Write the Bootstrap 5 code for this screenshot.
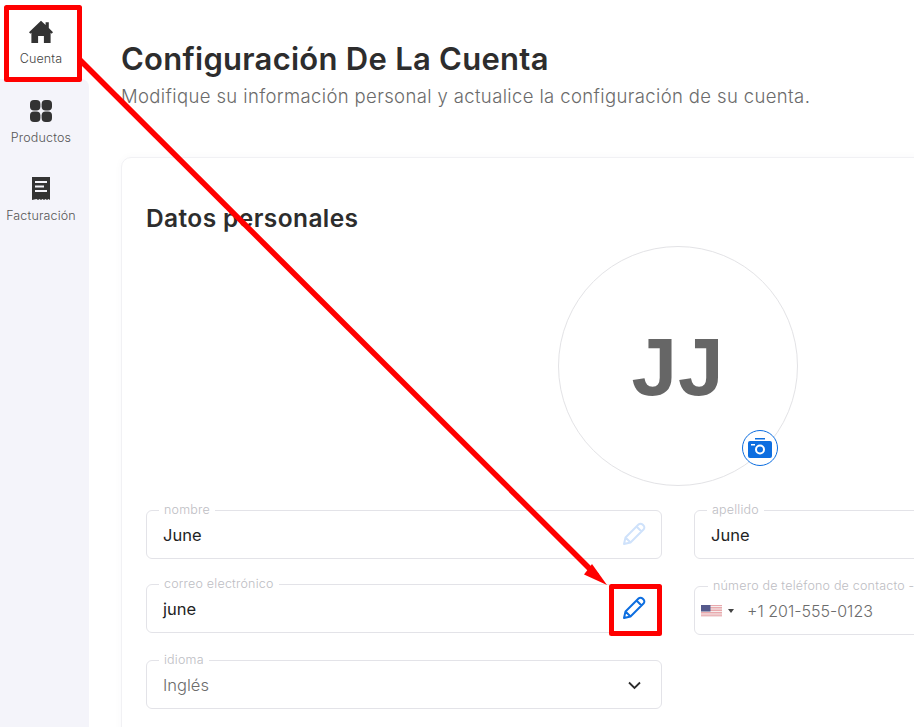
<!doctype html>
<html lang="es">
<head>
<meta charset="utf-8">
<title>Configuración de la cuenta</title>
<link href="https://cdn.jsdelivr.net/npm/bootstrap@5.3.0/dist/css/bootstrap.min.css" rel="stylesheet">
<style>
html,body{height:727px;overflow:hidden;background:#fff}
body{font-family:Inter,"Noto Sans",sans-serif;color:#2b2b2b;position:relative}
.shell{width:1235px;height:727px}
.side-rail{width:89px;flex:none;background:#fff}
.rail-item{height:78.5px;background:#f4f4fa;color:#555;font-size:12.5px;font-weight:300;padding:20px 7px 0 0;gap:8px;text-decoration:none;line-height:14px;letter-spacing:.15px;white-space:nowrap}
.rail-item.is-on{background:#fff;color:#444}
.rail-item.after-on{border-top-right-radius:8px}
.rail-fill{background:#f4f4fa}
.rail-item svg{display:block;height:24px;width:24px;fill:#333;flex:none}
.main-pane{padding:40px 0 0 32px}
.page-title{font-size:31px;font-weight:600;line-height:38px;margin:0;color:#2d2d2d;letter-spacing:.27px}
.page-sub{font-size:18.5px;font-weight:300;line-height:24px;margin:6px 0 0;color:#6b6b6b;letter-spacing:.37px}
.panel{margin-top:49px;border:1px solid #f1f1f4;border-radius:10px;padding:42px 24px 0;box-shadow:0 0 8px rgba(40,40,80,.03);height:640px}
.panel-head{font-size:24.500px;font-weight:600;line-height:36px;margin:0;color:#2d2d2d;letter-spacing:.4px}
.avatar-wrap{width:240px;height:240px;margin:10px auto 18px;position:relative}
.avatar-disc{width:240px;height:240px;border:1px solid #e3e3e6;border-radius:50%;font-family:"Liberation Sans",sans-serif;font-weight:700;font-size:82px;color:#666;letter-spacing:1px}
.cam-btn{position:absolute;left:184px;top:184px;width:36px;height:36px;border:1.5px solid #0d6ee0;border-radius:50%;background:#fff}
.cam-btn svg{width:24px;height:20px;fill:#0d6ee0}
.form-cols{gap:32px}
.form-col{width:516px;flex:none}
.fld{border:1px solid #e3e3e8;border-radius:6px;padding:0 16px;height:55px;min-width:0;margin:0;position:relative}
.fld legend{float:none;width:auto;font-size:12.5px;font-weight:300;line-height:12px;color:#bdbdc3;padding:0 5px;margin:0 0 0 -4px;letter-spacing:.2px}
.fld-val{font-size:16.5px;line-height:24px;color:#232323;padding-top:7px;font-weight:400}
.fld-val.is-muted{color:#6c6c6c;font-weight:300}
.gap-a{margin-top:19px}.gap-b{margin-top:21px}.gap-c{margin-top:21px}
.edit-ico{position:absolute;right:15px;top:6px;width:24px;height:24px;fill:none;stroke:#0d6ee0;stroke-width:2;stroke-linejoin:round}
.edit-ico.is-off{stroke:#cfe2fb}
.chev{position:absolute;right:20px;top:15px;width:13px;height:9px;fill:none;stroke:#2b2b2b;stroke-width:1.8}
.flag-ico{width:21px;height:12px;flex:none}
.flag-caret{width:0;height:0;border:3.5px solid transparent;border-top:4.5px solid #444;border-bottom:0;margin:0 13px 0 6px}
.phone-row{padding-top:7px}
.fld-phone{padding-left:6px}
.fld-phone .fld-val{font-size:16px}
.fld-phone legend{margin-left:7px}
.mark-layer{position:absolute;left:0;top:0;width:914px;height:727px;pointer-events:none}
</style>
</head>
<body>
<div class="shell d-flex">
  <nav class="side-rail d-flex flex-column">
    <a class="rail-item is-on d-flex flex-column align-items-center" href="#">
      <svg viewBox="0 0 24 24"><path d="M12 .8 16.600 5V2.200h3.200v5.800L24 12.200l-1.400 1.500-1-.9V23h-6.700v-7h-5.800v7H2.400V12.800l-1 .9L0 12.200z"/></svg>
      <span>Cuenta</span>
    </a>
    <a class="rail-item after-on d-flex flex-column align-items-center" href="#">
      <svg viewBox="0 0 24 24"><rect x="1" y="1" width="10.400" height="10.400" rx="4"/><rect x="12.600" y="1" width="10.400" height="10.400" rx="4"/><rect x="1" y="12.600" width="10.400" height="10.400" rx="4"/><rect x="12.600" y="12.600" width="10.400" height="10.400" rx="4"/></svg>
      <span>Productos</span>
    </a>
    <a class="rail-item d-flex flex-column align-items-center" href="#">
      <svg viewBox="0 0 24 24"><path fill-rule="evenodd" d="M3 0h18v23l-1.500-1-1.500 1-1.500-1-1.500 1-1.500-1-1.500 1-1.500-1-1.500 1-1.500-1L3 23zM6 4v2h12V4zm0 4.500v2h9v-2zm0 4.500v2h12v-2z"/></svg>
      <span>Facturación</span>
    </a>
    <div class="rail-fill flex-grow-1"></div>
  </nav>
  <main class="main-pane flex-grow-1">
    <h1 class="page-title">Configuración De La Cuenta</h1>
    <p class="page-sub">Modifique su información personal y actualice la configuración de su cuenta.</p>
    <section class="panel">
      <h2 class="panel-head">Datos personales</h2>
      <div class="avatar-wrap">
        <div class="avatar-disc d-flex align-items-center justify-content-center">JJ</div>
        <div class="cam-btn d-flex align-items-center justify-content-center">
          <svg viewBox="0 0 24 20"><path fill-rule="evenodd" d="M7 0h10v1.500H7zM2 3h20a2 2 0 0 1 2 2v13a2 2 0 0 1-2 2H2a2 2 0 0 1-2-2V5a2 2 0 0 1 2-2zm10 3.500a5 5 0 1 0 0 10 5 5 0 0 0 0-10zm0 2a3 3 0 1 1 0 6 3 3 0 0 1 0-6zM3 6v1.500h4V6z"/></svg>
        </div>
      </div>
      <div class="form-cols d-flex">
        <div class="form-col">
          <fieldset class="fld"><legend>nombre</legend><div class="fld-val">June</div>
            <svg class="edit-ico is-off" viewBox="0 0 24 24"><path d="M2 22l1.500-6.500L16.500 2.500a2.800 2.800 0 0 1 4 0l1 1a2.800 2.800 0 0 1 0 4L8.500 20.500zM3.500 15.500l5 5M14.500 4.500l5 5"/></svg>
          </fieldset>
          <fieldset class="fld gap-a"><legend>correo electrónico</legend><div class="fld-val">june</div>
            <svg class="edit-ico" viewBox="0 0 24 24"><path d="M2 22l1.500-6.500L16.500 2.500a2.800 2.800 0 0 1 4 0l1 1a2.800 2.800 0 0 1 0 4L8.500 20.500zM3.500 15.500l5 5M14.500 4.500l5 5"/></svg>
          </fieldset>
          <fieldset class="fld gap-b"><legend>idioma</legend><div class="fld-val is-muted">Inglés</div>
            <svg class="chev" viewBox="0 0 13 9"><path d="M1 1.500l5.500 5.500L12 1.500"/></svg>
          </fieldset>
        </div>
        <div class="form-col">
          <fieldset class="fld"><legend>apellido</legend><div class="fld-val">June</div></fieldset>
          <fieldset class="fld fld-phone gap-c"><legend>número de teléfono de contacto - opcional</legend>
            <div class="phone-row d-flex align-items-center">
              <svg class="flag-ico" viewBox="0 0 21 12"><rect width="21" height="12" fill="#e9a9ad"/><path d="M0 1.500h21M0 4h21M0 6.500h21M0 9h21M0 11.300h21" stroke="#f5eeee" stroke-width="1"/><rect width="9.500" height="6.500" fill="#555a8c"/></svg>
              <span class="flag-caret"></span>
              <span class="fld-val is-muted p-0">+1 201-555-0123</span>
            </div>
          </fieldset>
        </div>
      </div>
    </section>
  </main>
</div>
<svg class="mark-layer" viewBox="0 0 914 727">
  <g fill="none" stroke="#ff0000" stroke-width="5" stroke-linejoin="round">
    <rect x="6.500" y="7.500" width="73" height="72"/>
    <rect x="611.500" y="586.500" width="48" height="47"/>
    <path d="M80 60 597 576" stroke-width="5.600"/>
  </g>
  <path d="M607 585 584 574.500 592 564z" fill="#ff0000"/>
</svg>
</body>
</html>
